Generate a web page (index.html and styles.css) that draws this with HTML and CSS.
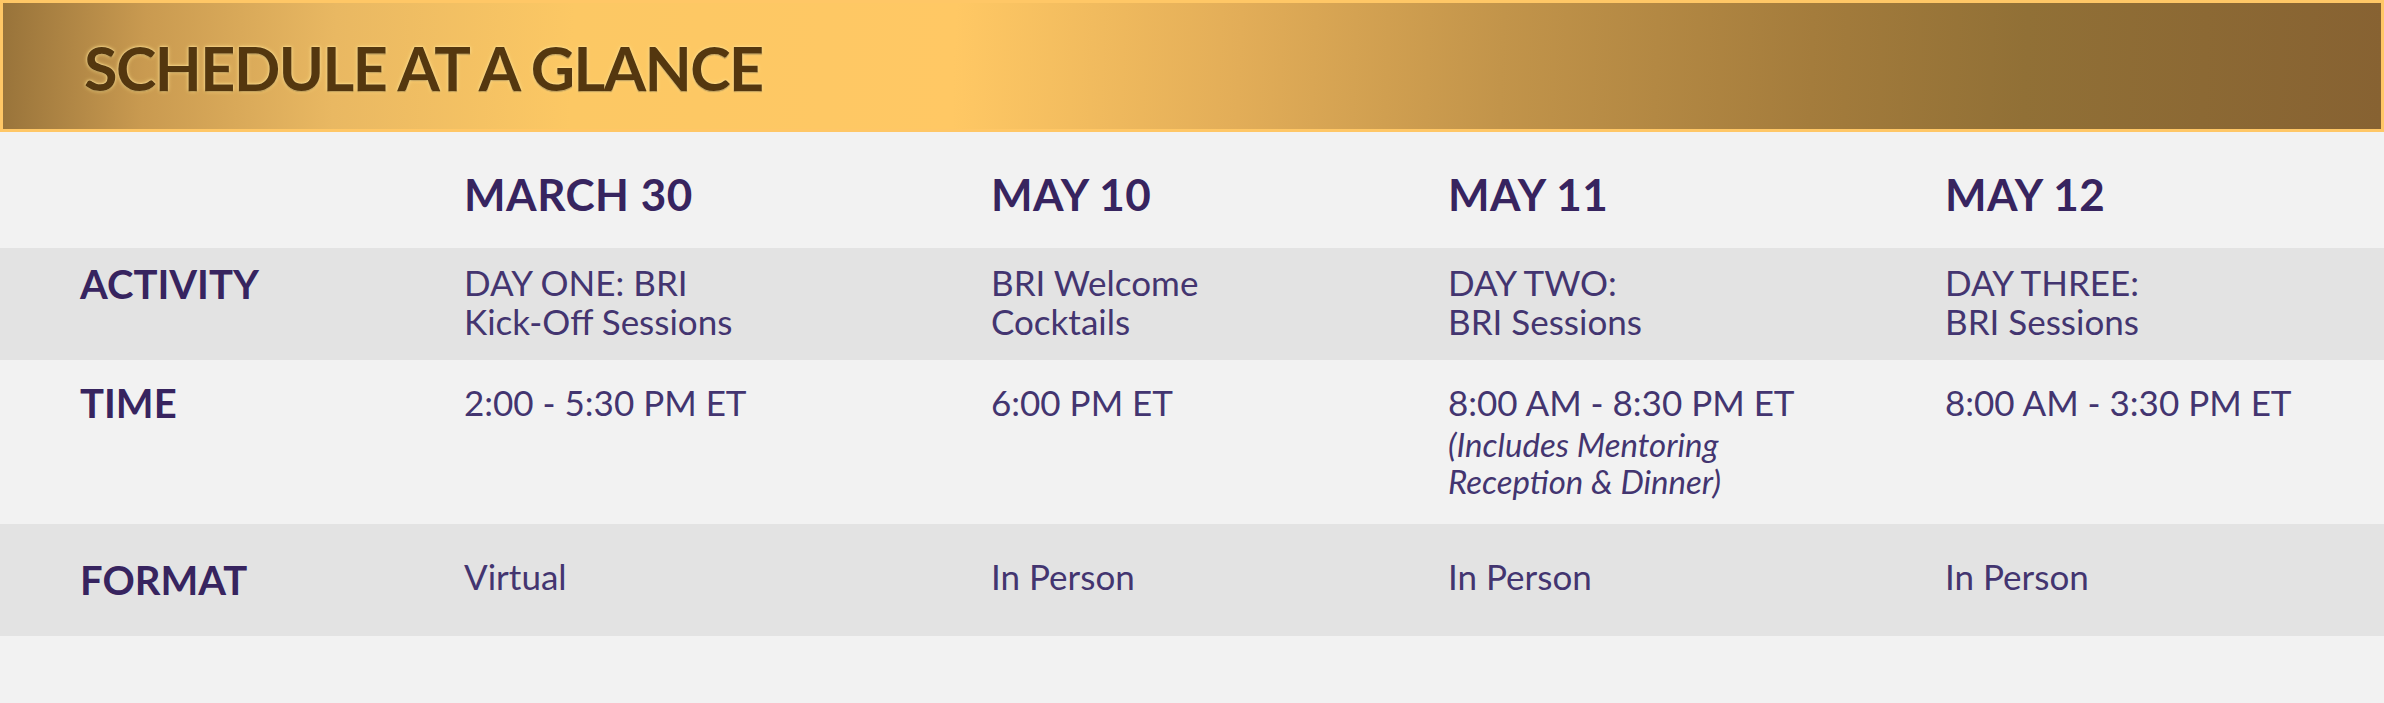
FILE: index.html
```html
<!DOCTYPE html>
<html lang="en">
<head>
<meta charset="utf-8">
<title>Schedule at a Glance</title>
<link rel="stylesheet" href="styles.css">
</head>
<body>
<div class="page">
  <header class="banner">
    <h1 class="banner-title">SCHEDULE AT A GLANCE</h1>
  </header>
  <section class="schedule">
    <div class="row row-head">
      <div class="cell label"></div>
      <div class="cell date">MARCH 30</div>
      <div class="cell date">MAY 10</div>
      <div class="cell date">MAY 11</div>
      <div class="cell date">MAY 12</div>
    </div>
    <div class="row row-activity band">
      <div class="cell label">ACTIVITY</div>
      <div class="cell body">DAY ONE: BRI<br>Kick-Off Sessions</div>
      <div class="cell body">BRI Welcome<br>Cocktails</div>
      <div class="cell body">DAY TWO:<br>BRI Sessions</div>
      <div class="cell body">DAY THREE:<br>BRI Sessions</div>
    </div>
    <div class="row row-time">
      <div class="cell label">TIME</div>
      <div class="cell body">2:00 - 5:30 PM ET</div>
      <div class="cell body">6:00 PM ET</div>
      <div class="cell body">8:00 AM - 8:30 PM ET<div class="note">(Includes Mentoring<br>Reception &amp; Dinner)</div></div>
      <div class="cell body">8:00 AM - 3:30 PM ET</div>
    </div>
    <div class="row row-format band">
      <div class="cell label">FORMAT</div>
      <div class="cell body">Virtual</div>
      <div class="cell body">In Person</div>
      <div class="cell body">In Person</div>
      <div class="cell body">In Person</div>
    </div>
  </section>
</div>
</body>
</html>
```
FILE: styles.css
```css
* { box-sizing: border-box; }
html, body {
  margin: 0;
  padding: 0;
  background: #f2f2f2;
}
body {
  width: 2384px;
  height: 703px;
  overflow: hidden;
  font-family: Lato, "Open Sans", "Liberation Sans", sans-serif;
}
.page {
  display: flex;
  flex-direction: column;
}
.banner {
  height: 132px;
  border: 3px solid #ffc766;
  padding: 34px 0 0 81px;
  background: linear-gradient(92deg,
    #98733a 0%,
    #c99a50 6%,
    #e9b862 14%,
    #fcc864 24%,
    #ffc864 40%,
    #e2ad58 52%,
    #c2944a 63%,
    #a47c3c 76%,
    #917036 85%,
    #876232 100%);
}
.banner-title {
  margin: 0;
  font-family: Lato, "Open Sans", sans-serif;
  font-weight: 700;
  font-size: 61px;
  line-height: 61px;
  color: #54370f;
  letter-spacing: -1.5px;
  text-shadow: 0 0 2px #ffe9a6, 0 0 4px #ffdc85, 0 1px 1px #6e4a15;
}
.schedule {
  display: flex;
  flex-direction: column;
}
.row {
  display: grid;
  grid-template-columns: 464px 527px 457px 497px 1fr;
}
.band { background: #e3e3e3; }
.row-head { height: 116px; }
.row-activity { height: 112px; }
.row-time { height: 164px; }
.row-format { height: 112px; }

.label {
  padding-left: 80px;
  font-weight: 700;
  font-size: 40px;
  line-height: 39px;
  color: #37245f;
}
.date {
  padding-top: 40px;
  font-weight: 700;
  font-size: 44px;
  line-height: 44px;
  letter-spacing: 0.5px;
  color: #37245f;
}
.body {
  font-size: 35px;
  line-height: 39px;
  color: #433570;
}
.row-activity .label { padding-top: 17px; }
.row-activity .body { padding-top: 15px; }
.row-time .label { padding-top: 24px; }
.row-time .body { padding-top: 22px; line-height: 40px; }
.row-format .label { padding-top: 37px; }
.row-format .body { padding-top: 33px; }
.note {
  margin-top: 4px;
  font-style: italic;
  font-size: 33px;
  line-height: 37px;
}
```
